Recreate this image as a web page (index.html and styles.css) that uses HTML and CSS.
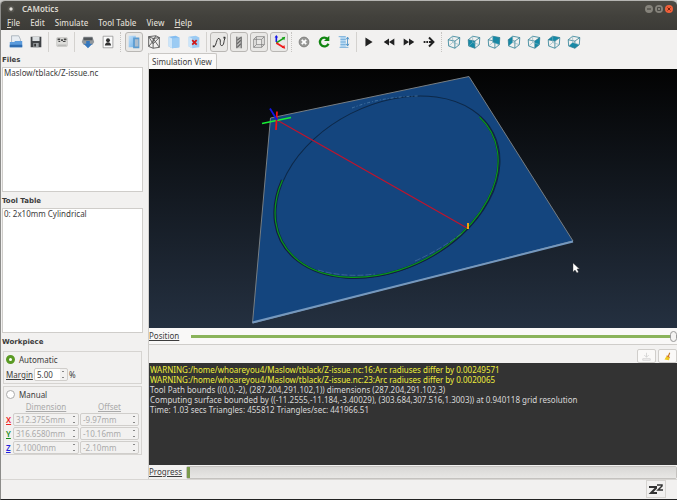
FILE: index.html
```html
<!DOCTYPE html>
<html lang="en">
<head>
<meta charset="utf-8">
<title>CAMotics</title>
<link rel="stylesheet" href="styles.css">
</head>
<body>
<svg class="defs" aria-hidden="true">
  <defs>
    <linearGradient id="sky" x1="0" y1="0" x2="0" y2="1"><stop offset="0" stop-color="#030303"/><stop offset="1" stop-color="#243040"/></linearGradient>
    <linearGradient id="glass" x1="0" y1="0" x2="1" y2="1"><stop offset="0" stop-color="#c4e2fa"/><stop offset="1" stop-color="#6fb0e8"/></linearGradient>
    <g id="cube" fill="none" stroke="#2f7f95" stroke-width=".9"><path d="M2.500 6.500l7.500 1.500v8l-7-2.500zM2.500 6.500l5-4 8 1.500-5.500 4M15.500 4l-.5 8-5 4"/><path d="M7.500 2.500v7l7.500 2.500M7.500 9.500l-4.500 4" stroke="#7fb0bd" stroke-width=".7"/></g>
  </defs>
</svg>
<div class="window">
  <header class="titlebar">
    <svg class="dot" viewBox="0 0 8 8"><circle cx="4" cy="4" r="3.500" fill="#55544e"/><circle cx="4" cy="4" r="1.700" fill="#e2e0da"/></svg>
    <h1>CAMotics</h1>
    <div class="winbtns">
      <button aria-label="Minimize"><svg viewBox="0 0 8 8"><circle cx="4" cy="4" r="4" fill="#85837b"/><path d="M2 4h4" stroke="#3c3b37"/></svg></button>
      <button aria-label="Maximize"><svg viewBox="0 0 8 8"><circle cx="4" cy="4" r="4" fill="#85837b"/><path d="M2.500 2.500h3v3h-3z" fill="none" stroke="#3c3b37" stroke-width=".8"/></svg></button>
      <button aria-label="Close"><svg viewBox="0 0 8 8"><circle cx="4" cy="4" r="4" fill="#f0603a"/><path d="M2.500 2.500l3 3m0-3l-3 3" stroke="#7a2008"/></svg></button>
    </div>
  </header>
  <nav class="menubar">
    <button><u>F</u>ile</button><button>Edit</button><button>Simulate</button><button>Tool Table</button><button>View</button><button><u>H</u>elp</button>
  </nav>
  <div class="toolbar">
    <div class="group">
      <button aria-label="Open"><svg viewBox="0 0 18 18"><path d="M4 2h8l2 4v5H4z" fill="#e8edf2" stroke="#8b98a5" stroke-width=".7"/><path d="M2 9h5l1-1h8v7H2z" fill="#5b9bdc"/><path d="M2 12h14v3H2z" fill="#2f6cb0"/></svg></button>
      <button aria-label="Save"><svg viewBox="0 0 18 18"><path d="M3 3h12v12H3z" fill="#3f4245"/><path d="M5 3h8v5H5z" fill="#d9dddf"/><path d="M6 10h6v5H6z" fill="#9ca1a4"/><path d="M7 11h2v3H7z" fill="#333"/></svg></button>
    </div>
    <div class="group"><button aria-label="Export"><svg viewBox="0 0 18 18"><rect x="3" y="4" width="12" height="10" rx="1" fill="#dededb" stroke="#b5b5b2" stroke-width=".6"/><path d="M4 5h3v2H4zm4 1h2v2H8zm3-1h3v2h-3zM5 8h2v1H5zm5 0h3v1h-3z" fill="#444"/><path d="M4 12h10v1H4z" fill="#999"/></svg></button></div>
    <div class="group">
      <button aria-label="Download"><svg viewBox="0 0 18 18"><path d="M4 3h10l2 6-2 3H4L2 9z" fill="#94999d"/><path d="M4 4h10v3H4z" fill="#52575b"/><path d="M7 8h4v3h3l-5 5-5-5h3z" fill="#3477be"/></svg></button>
      <button aria-label="Account"><svg viewBox="0 0 18 18"><path d="M3.500 2.500h11v13h-11z" fill="#fafafa" stroke="#888" stroke-width=".8"/><circle cx="9" cy="7" r="2.200" fill="#333"/><path d="M5.500 13c0-5 7-5 7 0z" fill="#333"/></svg></button>
    </div>
    <div class="group dotted">
      <button class="on" aria-label="Workpiece surface"><svg viewBox="0 0 18 18"><path d="M3 2h8v13H3z" fill="url(#glass)"/><path d="M8 4h7v12H8z" fill="#5c9bd0"/><path d="M10 6h4v8h-4z" fill="#aebdcc"/></svg></button>
      <button aria-label="Wireframe"><svg viewBox="0 0 18 18"><path d="M3 3l8-1 4 2v11l-7 1-5-2zM3 3l5 2 7-1M8 5v11M3 3l5 8 7-7M8 5l7 10M3 14l5-6M11 2L8 8" fill="none" stroke="#555"/></svg></button>
      <button aria-label="Solid"><svg viewBox="0 0 18 18"><path d="M3 3l8-1 4 2v11l-8 1-4-2z" fill="#84bdf0"/><path d="M3 3l4 2v11l-4-2z" fill="#cce5f9"/><path d="M7 5l8-1v11l-8 1z" fill="#9bcbf3"/></svg></button>
      <button aria-label="Hide"><svg viewBox="0 0 18 18"><path d="M3 3l8-1 4 2v11l-8 1-4-2z" fill="#9bcbf3"/><path d="M3 3l4 2v11l-4-2z" fill="#cce5f9"/><path d="M7 7l5 5m0-5l-5 5" stroke="#d01818" stroke-width="2"/></svg></button>
    </div>
    <div class="group">
      <button class="on" aria-label="Path"><svg viewBox="0 0 18 18"><path d="M3 14C6 15 6 4 9 5s0 8 3 8 2-5 4-9" fill="none" stroke="#333" stroke-width="1.100"/><path d="M2 13h2v2H2zm12-10h2v2h-2z" fill="#333"/></svg></button>
      <button class="on" aria-label="Tool"><svg viewBox="0 0 18 18"><path d="M6 3h6v13H6z" fill="#c5c5c3"/><path d="M6.500 3v13M11.500 3v13" stroke="#555"/><path d="M7 7l4-3M7 11l4-4M7 15l4-4" stroke="#666" stroke-width="1.300"/></svg></button>
      <button class="on" aria-label="Bounding box"><svg viewBox="0 0 18 18"><path d="M3 6h9v9H3zM6 3h9v9H6zM3 6l3-3M12 6l3-3M3 15l3-3M12 15l3-3" fill="none" stroke="#777" stroke-width=".8"/></svg></button>
      <button class="on" aria-label="Axes"><svg viewBox="0 0 18 18"><path d="M6 9V3" stroke="#1717e8" stroke-width="1.800"/><path d="M6 10l8-5" stroke="#13a013" stroke-width="1.800"/><path d="M6 10l8 5" stroke="#ef1c1c" stroke-width="2"/><path d="M4 4l2-3 2 3z" fill="#1717e8"/><path d="M12 4l4-1-1 4z" fill="#13a013"/><path d="M12 15.500l4 1-1-4z" fill="#ef1c1c"/></svg></button>
    </div>
    <div class="group dotted">
      <button aria-label="Stop"><svg viewBox="0 0 18 18"><circle cx="9" cy="9" r="5.500" fill="#9a9a98" stroke="#7d7d7b"/><path d="M6.500 6.500l5 5m0-5l-5 5" stroke="#fff" stroke-width="2"/></svg></button>
      <button aria-label="Reload"><svg viewBox="0 0 18 18"><path d="M13 5.500a5 5 0 1 0 1 5.500" fill="none" stroke="#108510" stroke-width="2.600"/><path d="M15 2v6H9z" fill="#108510"/></svg></button>
      <button aria-label="Optimize"><svg viewBox="0 0 18 18"><path d="M5 3h6v12H5z" fill="#b9daf3"/><path d="M3 3h8M5 6h6M5 9h6M5 12h6M4 15h10" stroke="#6aa8d8"/><path d="M13 4v9M11.500 6L13 3.500 14.500 6M11.500 11l1.500 2.500 1.500-2.500" fill="none" stroke="#478ec5"/></svg></button>
    </div>
    <div class="group">
      <button aria-label="Play"><svg viewBox="0 0 18 18"><path d="M5 4l8 5-8 5z" fill="#222"/></svg></button>
      <button aria-label="Slower"><svg viewBox="0 0 18 18"><path d="M9 5v8L3 9zm6 0v8L9 9z" fill="#222"/></svg></button>
      <button aria-label="Faster"><svg viewBox="0 0 18 18"><path d="M3 5v8l6-4zm6 0v8l6-4z" fill="#222"/></svg></button>
      <button aria-label="Step"><svg viewBox="0 0 18 18"><path d="M3 8h2v2H3zm3 0h2v2H6zm3 0h4v2H9z" fill="#222"/><path d="M9 4l5 5-5 5" fill="none" stroke="#222" stroke-width="2.200"/></svg></button>
    </div>
    <div class="group dotted">
      <button aria-label="Isometric view"><svg viewBox="0 0 18 18"><use href="#cube"/></svg></button>
      <button aria-label="Front view"><svg viewBox="0 0 18 18"><path d="M2.500 6.500l7.500 1.500v8l-7-2.500z" fill="#148aa8"/><use href="#cube"/></svg></button>
      <button aria-label="Back view"><svg viewBox="0 0 18 18"><path d="M7.500 2.500l8 1.500-.5 8-7.500-2.500z" fill="#148aa8"/><use href="#cube"/></svg></button>
      <button aria-label="Left view"><svg viewBox="0 0 18 18"><path d="M2.500 6.500l5-4v7l-4.500 4z" fill="#148aa8"/><use href="#cube"/></svg></button>
      <button aria-label="Right view"><svg viewBox="0 0 18 18"><path d="M10 8l5.500-4-.5 8-5 4z" fill="#148aa8"/><use href="#cube"/></svg></button>
      <button aria-label="Top view"><svg viewBox="0 0 18 18"><path d="M2.500 6.500l5-4 8 1.500-5.500 4z" fill="#148aa8"/><use href="#cube"/></svg></button>
      <button aria-label="Bottom view"><svg viewBox="0 0 18 18"><path d="M3 13.500l4.500-4 7.500 2.500-5 4z" fill="#148aa8"/><use href="#cube"/></svg></button>
    </div>
  </div>
  <main class="body">
    <aside class="side">
      <h2>Files</h2>
      <ul class="list"><li>Maslow/tblack/Z-issue.nc</li></ul>
      <h2>Tool Table</h2>
      <ul class="list"><li>0: 2x10mm Cylindrical</li></ul>
      <h2>Workpiece</h2>
      <section class="box">
        <label class="choice"><input type="radio" name="mode" checked>Automatic</label>
        <div class="margin"><label for="margin"><u>Margin</u></label><span class="spin"><input id="margin" value="5.00"><i></i></span><span>%</span></div>
      </section>
      <section class="box manual">
        <label class="choice"><input type="radio" name="mode">Manual</label>
        <div class="dims">
          <span></span><u class="head">Dimension</u><u class="head">Offset</u>
          <label class="x" for="dx">X</label><span class="spin"><input id="dx" value="312.3755mm" disabled><i></i></span><span class="spin"><input aria-label="X offset" value="-9.97mm" disabled><i></i></span>
          <label class="y" for="dy">Y</label><span class="spin"><input id="dy" value="316.6580mm" disabled><i></i></span><span class="spin"><input aria-label="Y offset" value="-10.16mm" disabled><i></i></span>
          <label class="z" for="dz">Z</label><span class="spin"><input id="dz" value="2.1000mm" disabled><i></i></span><span class="spin"><input aria-label="Z offset" value="-2.10mm" disabled><i></i></span>
        </div>
      </section>
    </aside>
    <section class="content">
      <div class="tabs"><button>Simulation View</button></div>
      <svg class="scene" viewBox="149 69 528 259" preserveAspectRatio="none" role="img" aria-label="Simulation">
        <path d="M149 69h528v259H149z" fill="url(#sky)"/>
        <path d="M270.500 118L469 76.500 573 241 252.500 323z" fill="#14457e" stroke="#777e83"/>
        <path d="M252.500 322.500L573 241.500" stroke="#7598be" stroke-width="2"/>
        <ellipse cx="388" cy="187" rx="118.500" ry="82.300" transform="rotate(-27 388 187)" fill="none" stroke="#0d2848" stroke-width="1"/>
        <path d="M282 180A118.500 82.300 -27 1 0 480 117" fill="none" stroke="#141c3e" stroke-width="2.200"/>
        <path d="M282.500 180A118 82 -27 1 0 479.500 117" fill="none" stroke="#08981a" stroke-width="1.200"/>
        <path d="M352 108Q380 97 418 96" fill="none" stroke="#4c7ca8" stroke-width=".8" stroke-dasharray="3 2 1 2"/>
        <path d="M318 270Q345 278 375 274M415 261Q440 250 462 233" fill="none" stroke="#5177a5" stroke-width=".6" stroke-dasharray="6 2"/>
        <path d="M277 120L467 228" stroke="#c3132b" stroke-width="1.200"/>
        <path d="M262 123.500L291 117.500" stroke="#16ee35" stroke-width="1.600"/>
        <path d="M277 111.500L276 130" stroke="#f01010" stroke-width="1.800"/>
        <path d="M270 108.500L277 120" stroke="#1414e8" stroke-width="1.800"/>
        <path d="M468 223v6" stroke="#f5a010" stroke-width="2"/>
        <path d="M573 263v9l2-2 2 3 1.500-1-1.500-3h2.500z" fill="#fff" stroke="#333" stroke-width=".4"/>
      </svg>
      <div class="position"><label for="pos"><u>Position</u></label><input id="pos" type="range" value="100"></div>
      <div class="actions">
        <button aria-label="Save log"><svg viewBox="0 0 12 12"><path d="M6 1v6M3 4l3 3 3-3M1 9h10v2H1z" fill="none" stroke="#ccc"/></svg></button>
        <button aria-label="Clear log"><svg viewBox="0 0 12 12"><path d="M9 1L7 6" stroke="#c67b22" stroke-width="1.500"/><path d="M5 5l4 2-1 4-6-1z" fill="#edc920"/><path d="M5 5l4 2" stroke="#c43b20"/></svg></button>
      </div>
      <div class="console">
        <p class="warn">WARNING:/home/whoareyou4/Maslow/tblack/Z-issue.nc:16:Arc radiuses differ by 0.00249571</p>
        <p class="warn">WARNING:/home/whoareyou4/Maslow/tblack/Z-issue.nc:23:Arc radiuses differ by 0.0020065</p>
        <p>Tool Path bounds ((0,0,-2), (287.204,291.102,1)) dimensions (287.204,291.102,3)</p>
        <p>Computing surface bounded by ((-11.2555,-11.184,-3.40029), (303.684,307.516,1.3003)) at 0.940118 grid resolution</p>
        <p>Time: 1.03 secs Triangles: 455812 Triangles/sec: 441966.51</p>
      </div>
      <div class="progress"><label for="prog"><u>Progress</u></label><progress id="prog" value="0.5" max="100"></progress></div>
    </section>
  </main>
  <footer class="status"><span class="sleep"><svg viewBox="0 0 18 16"><path d="M2 6h7v1l-5 5h6" fill="none" stroke="#333" stroke-width="2"/><path d="M10 4h5v1l-4 4h5" fill="none" stroke="#333" stroke-width="1.500"/></svg></span></footer>
</div>
</body>
</html>
```

FILE: styles.css
```css
* { box-sizing: border-box; }
body { margin: 0; background: #c9c9c7; color: #3c3c3c; font: 8px/10px "Noto Sans", sans-serif; }
h1, h2, p, ul { margin: 0; padding: 0; list-style: none; }
button { margin: 0; padding: 0; border: 0; background: none; color: inherit; font: inherit; }
input { font: inherit; color: inherit; }
svg { display: block; }
.defs { position: absolute; width: 0; height: 0; }
.window { height: 100vh; display: flex; flex-direction: column; background: #f2f1f0; border-left: 1px solid #8c8c8a; border-bottom: 1px solid #222; border-top: 1px solid #b5b5b2; border-radius: 5px 5px 0 0; overflow: hidden; }
.titlebar { height: 15px; flex: none; display: flex; align-items: center; padding: 0 4px 0 6px; background: linear-gradient(#4d4c46, #42413c); color: #dfdbd2; }
.dot { width: 8px; height: 8px; margin-right: 7px; }
.titlebar h1 { font-size: 8px; font-weight: 600; }
.winbtns { display: flex; gap: 2px; margin-left: auto; }
.winbtns svg { width: 8px; height: 8px; }
.menubar { height: 14px; flex: none; display: flex; align-items: center; gap: 10px; padding: 0 6px; background: linear-gradient(#42413c, #3c3b37); color: #dfdbd2; font-weight: 500; }
.toolbar { height: 23px; flex: none; display: flex; align-items: center; padding-left: 5px; }
.toolbar button { width: 20px; height: 20px; display: grid; place-items: center; flex: none; }
.toolbar svg { width: 16px; height: 16px; }
.toolbar .on { width: 18px; margin: 0 1px; border: 1px solid #b9b7b4; border-radius: 3px; background: #e9e8e6; }
.group { display: flex; }
.group + .group { margin-left: 2px; padding-left: 3px; border-left: 1px solid #d4d2cf; }
.group + .group:nth-child(n+5) { padding-left: 2px; }
.group + .dotted { border-left: 1px dotted #c6c4c1; }
.body { flex: 1; display: flex; min-height: 0; gap: 5px; }
.side { width: 142px; flex: none; display: flex; flex-direction: column; padding-left: 1px; }
.side h2 { font: bold 7px/14px "DejaVu Sans", sans-serif; }
.list { flex: 1; background: #fff; border: 1px solid #cfcdca; padding: 0 1px; margin-bottom: 2px; }
.box { border: 1px solid #d6d4d1; margin: 2px 1px 0 1px; padding: 2px 2px; height: 33px; }
.choice { display: flex; align-items: center; gap: 4px; height: 11px; }
.choice input { appearance: none; width: 9px; height: 9px; margin: 0; border: 1px solid #aaa; border-radius: 50%; background: #fff; }
.choice input:checked { border: 3px solid #5a9a24; }
.margin { display: flex; align-items: center; gap: 1px; margin-top: 3px; }
.spin { display: flex; align-items: center; height: 13px; border: 1px solid #d0cecb; border-radius: 2px; background: #f2f1f0; min-width: 0; }
.spin input { width: 100%; min-width: 0; height: 11px; border: 0; padding: 0 2px; background: transparent; }
.spin i { flex: none; width: 8px; height: 7px; background: linear-gradient(#888, #888) 50% 0 / 2px 1px no-repeat, linear-gradient(#888, #888) 50% 100% / 2px 1px no-repeat; }
.margin .spin { width: 34px; background: linear-gradient(90deg, #fff 25px, #f2f1f0 25px); }
.manual { height: 69px; margin-bottom: 24px; }
.dims { display: grid; grid-template-columns: 6px 66px 1fr; gap: 1px 1px; margin-top: 2px; color: #aaa; }
.head { text-align: center; }
.dims label { text-decoration: underline; font-weight: 600; align-self: center; }
.x { color: #e22; }
.y { color: #188a18; }
.z { color: #22d; }
.content { flex: 1; min-width: 0; display: flex; flex-direction: column; border-left: 1px solid #d0cecb; }
.tabs { height: 16px; flex: none; display: flex; }
.tabs button { padding: 0 4px 0 3px; background: #faf9f8; border: 1px solid #c9c7c4; border-width: 1px 1px 0 0; border-radius: 2px 2px 0 0; }
.scene { width: 100%; flex: 1; min-height: 0; }
.position { height: 17px; flex: none; display: flex; align-items: center; gap: 12px; background: #f9f8f7; border-bottom: 1px solid #cfcdca; }
.position input { flex: 1; min-width: 0; margin: 0; appearance: none; height: 12px; background: linear-gradient(#8ab35a, #8ab35a) 0 50% / 100% 3px no-repeat; }
.position input::-webkit-slider-thumb { appearance: none; width: 7px; height: 11px; border: 1px solid #999; border-radius: 4px; background: #f4f3f2; }
.actions { height: 18px; flex: none; display: flex; justify-content: flex-end; align-items: flex-end; gap: 2px; }
.actions button { width: 19px; height: 14px; display: grid; place-items: center; background: #faf9f8; border: 1px solid #d0cecb; border-radius: 2px; }
.actions svg { width: 9px; height: 9px; }
.console { height: 102px; flex: none; background: #333; color: #d8d8d8; padding: 2px 1px; line-height: 10px; white-space: nowrap; overflow: hidden; }
.warn { color: #eeee3c; }
.progress { height: 14px; flex: none; display: flex; align-items: center; gap: 4px; }
progress { flex: 1; min-width: 0; height: 13px; appearance: none; border: 1px solid #c4c2bf; border-radius: 2px; background: #e0dfdd; }
progress::-webkit-progress-bar { background: linear-gradient(#d8d7d5, #e8e7e5); }
progress::-webkit-progress-value { background: #7a9a4c; }
.status { height: 20px; flex: none; display: flex; justify-content: flex-end; padding-right: 11px; border-top: 1px solid #d8d6d3; }
.sleep { width: 20px; height: 18px; border: 1px solid #d6d4d1; }
.sleep svg { width: 18px; height: 16px; }
```
